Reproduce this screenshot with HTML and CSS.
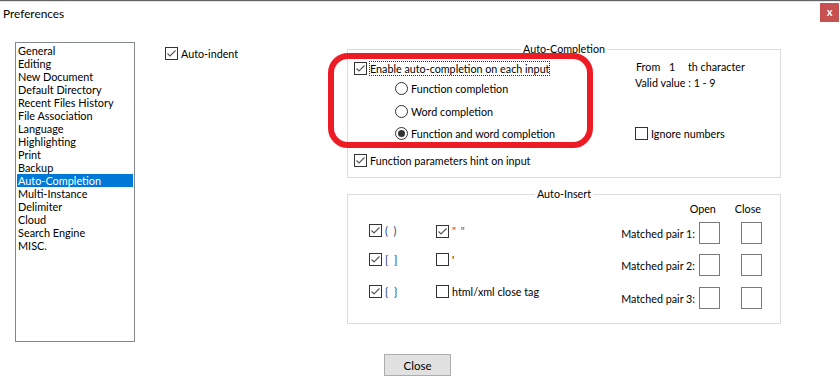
FILE: index.html
```html
<!DOCTYPE html>
<html lang="en">
<head>
    <meta charset="UTF-8">
    <title>Preferences</title>
    <link rel="stylesheet" href="styles.css">
</head>
<body>
<div class="dialog">
    <div class="topline"></div>

    <div class="titlebar">
        <span class="title">Preferences</span>
        <span class="close-x">x</span>
    </div>

    <div class="main">
        <ul class="pages">
            <li>General</li>
            <li>Editing</li>
            <li>New Document</li>
            <li>Default Directory</li>
            <li>Recent Files History</li>
            <li>File Association</li>
            <li>Language</li>
            <li>Highlighting</li>
            <li>Print</li>
            <li>Backup</li>
            <li class="selected">Auto-Completion</li>
            <li>Multi-Instance</li>
            <li>Delimiter</li>
            <li>Cloud</li>
            <li>Search Engine</li>
            <li>MISC.</li>
        </ul>

        <div class="indent-col">
            <label class="row check">
                <svg class="box" width="13" height="13" viewBox="0 0 13 13"><rect x="0.5" y="0.5" width="12" height="12" fill="#fff" stroke="#333"/><polyline points="2.5,6.5 5,9 10.5,3.5" fill="none" stroke="#555" stroke-width="1.1"/></svg>
                <span>Auto-indent</span>
            </label>
        </div>

        <div class="groups">
            <fieldset class="group">
                <legend>Auto-Completion</legend>
                <div class="group-body complete-body">
                    <div class="complete-left">
                        <label class="row check enable-row">
                            <svg class="box" width="13" height="13" viewBox="0 0 13 13"><rect x="0.5" y="0.5" width="12" height="12" fill="#fff" stroke="#333"/><polyline points="2.5,6.5 5,9 10.5,3.5" fill="none" stroke="#555" stroke-width="1.1"/></svg>
                            <span class="focused">Enable auto-completion on each input</span>
                        </label>
                        <div class="radios">
                            <label class="row radio r1">
                                <svg width="13" height="13" viewBox="0 0 13 13"><circle cx="6.5" cy="6.5" r="6" fill="#fff" stroke="#333"/></svg>
                                <span>Function completion</span>
                            </label>
                            <label class="row radio r2">
                                <svg width="13" height="13" viewBox="0 0 13 13"><circle cx="6.5" cy="6.5" r="6" fill="#fff" stroke="#333"/></svg>
                                <span>Word completion</span>
                            </label>
                            <label class="row radio r3">
                                <svg width="13" height="13" viewBox="0 0 13 13"><circle cx="6.5" cy="6.5" r="6" fill="#fff" stroke="#333"/><circle cx="6.5" cy="6.5" r="3.5" fill="#333"/></svg>
                                <span>Function and word completion</span>
                            </label>
                        </div>
                        <label class="row check params-row">
                            <svg class="box" width="13" height="13" viewBox="0 0 13 13"><rect x="0.5" y="0.5" width="12" height="12" fill="#fff" stroke="#333"/><polyline points="2.5,6.5 5,9 10.5,3.5" fill="none" stroke="#555" stroke-width="1.1"/></svg>
                            <span>Function parameters hint on input</span>
                        </label>
                    </div>
                    <div class="complete-right">
                        <div class="line from-line">
                            <span class="from">From</span><span class="num">1</span><span>th character</span>
                        </div>
                        <div class="line">Valid value : 1 - 9</div>
                        <label class="row check ignore-row">
                            <svg class="box" width="13" height="13" viewBox="0 0 13 13"><rect x="0.5" y="0.5" width="12" height="12" fill="#fff" stroke="#333"/></svg>
                            <span>Ignore numbers</span>
                        </label>
                    </div>
                </div>
            </fieldset>

            <fieldset class="group insert-group">
                <legend>Auto-Insert</legend>
                <div class="group-body insert-body">
                    <div class="insert-checks">
                        <label class="row check cell c1">
                            <svg class="box" width="13" height="13" viewBox="0 0 13 13"><rect x="0.5" y="0.5" width="12" height="12" fill="#fff" stroke="#333"/><polyline points="2.5,6.5 5,9 10.5,3.5" fill="none" stroke="#555" stroke-width="1.1"/></svg>
                            <span class="sym">( )</span>
                        </label>
                        <label class="row check cell c2 first">
                            <svg class="box" width="13" height="13" viewBox="0 0 13 13"><rect x="0.5" y="0.5" width="12" height="12" fill="#fff" stroke="#333"/><polyline points="2.5,6.5 5,9 10.5,3.5" fill="none" stroke="#555" stroke-width="1.1"/></svg>
                            <span class="quote">" "</span>
                        </label>
                        <label class="row check cell c1">
                            <svg class="box" width="13" height="13" viewBox="0 0 13 13"><rect x="0.5" y="0.5" width="12" height="12" fill="#fff" stroke="#333"/><polyline points="2.5,6.5 5,9 10.5,3.5" fill="none" stroke="#555" stroke-width="1.1"/></svg>
                            <span class="sym">[ ]</span>
                        </label>
                        <label class="row check cell c2">
                            <svg class="box" width="13" height="13" viewBox="0 0 13 13"><rect x="0.5" y="0.5" width="12" height="12" fill="#fff" stroke="#333"/></svg>
                            <span>'</span>
                        </label>
                        <label class="row check cell c1 last">
                            <svg class="box" width="13" height="13" viewBox="0 0 13 13"><rect x="0.5" y="0.5" width="12" height="12" fill="#fff" stroke="#333"/><polyline points="2.5,6.5 5,9 10.5,3.5" fill="none" stroke="#555" stroke-width="1.1"/></svg>
                            <span class="sym">{ }</span>
                        </label>
                        <label class="row check cell c2 last">
                            <svg class="box" width="13" height="13" viewBox="0 0 13 13"><rect x="0.5" y="0.5" width="12" height="12" fill="#fff" stroke="#333"/></svg>
                            <span>html/xml close tag</span>
                        </label>
                    </div>

                    <div class="pairs">
                        <div class="pairs-head">
                            <span class="open-h">Open</span>
                            <span class="close-h">Close</span>
                        </div>
                        <div class="pair p1">
                            <span>Matched pair 1:</span><span class="pbox"></span><span class="pbox second"></span>
                        </div>
                        <div class="pair p2">
                            <span>Matched pair 2:</span><span class="pbox"></span><span class="pbox second"></span>
                        </div>
                        <div class="pair p3">
                            <span>Matched pair 3:</span><span class="pbox"></span><span class="pbox second"></span>
                        </div>
                    </div>
                </div>
            </fieldset>
        </div>
    </div>

    <div class="footer">
        <button class="btn">Close</button>
    </div>

    <!-- red highlight drawn over the dialog -->
    <div class="annotation"></div>
</div>
</body>
</html>
```

FILE: styles.css
```css
/* Preferences dialog - Auto-Completion page */
:root {
    --text: #000;
    --group-line: #dcdcdc;
    --list-border: #828790;
    --select-bg: #0078d7;
    --mark-red: #ed1c24;
}

html, body {
    margin: 0;
    background: #fff;
}

body {
    font-family: Lato, "Segoe UI", sans-serif;
    font-size: 10.75px;
    color: var(--text);
}

.dialog {
    position: relative;
    width: 840px;
    height: 384px;
    overflow: hidden;
}

.topline {
    height: 1px;
    background: #646464;
    border-bottom: 1px solid #e4e4e4;
}

.titlebar {
    height: 23px;
    display: flex;
    justify-content: space-between;
    align-items: flex-start;
    padding-left: 3px;
}

.title {
    margin-top: 4px;
    line-height: 16px;
    font-size: 11.8px;
}

.close-x {
    width: 19px;
    height: 19px;
    margin: 1px 1px 0 0;
    background: #c75050;
    color: #fff;
    font-weight: bold;
    font-size: 11px;
    line-height: 17px;
    text-align: center;
}

.main {
    display: flex;
    align-items: flex-start;
}

/* left page list */
.pages {
    list-style: none;
    margin: 17px 0 0 15px;
    padding: 1px;
    width: 116px;
    height: 296px;
    border: 1px solid var(--list-border);
    font-size: 10.9px;
}

.pages li {
    height: 13px;
    line-height: 13px;
    padding-left: 1px;
    white-space: nowrap;
}

.pages li.selected {
    background: var(--select-bg);
    color: #fff;
}

.indent-col {
    width: 212px;
    padding: 18px 0 0 30px;
    box-sizing: border-box;
}

/* generic rows */
.row {
    display: flex;
    align-items: center;
    height: 20px;
    white-space: nowrap;
}

.row svg {
    flex: none;
    display: block;
}

.check {
    gap: 3px;
}

.radio {
    gap: 3px;
}

.groups {
    width: 434px;
    margin-top: 17px;
}

.group {
    margin: 0;
    padding: 0;
    min-width: 0;
    border: 1px solid var(--group-line);
}

.group legend {
    margin: 0 auto;
    padding: 0 2px;
    line-height: 14px;
}

.insert-group {
    margin-top: 9px;
}

.group-body {
    display: flex;
}

/* auto-completion */
.complete-body {
    padding: 0 0 7px 6px;
}

.complete-left {
    width: 281px;
}

.enable-row {
    margin-top: 2px;
}

.focused {
    outline: 1px dotted #333;
    outline-offset: 0;
    line-height: 13px;
}

.radios {
    padding-left: 41px;
}

.r2 {
    margin-top: 3px;
}

.r3 {
    margin-top: 2px;
}

.params-row {
    margin-top: 7px;
}

.complete-right .line {
    height: 16px;
    line-height: 16px;
    white-space: nowrap;
}

.from-line {
    margin-top: 3px;
    padding-left: 1px;
}

.from {
    display: inline-block;
    width: 33px;
}

.num {
    display: inline-block;
    width: 19px;
}

.ignore-row {
    margin-top: 32px;
}

/* auto-insert */
.insert-body {
    justify-content: space-between;
    padding: 0 18px 14px 21px;
}

.insert-checks {
    display: grid;
    grid-template-columns: 67px auto;
    align-content: start;
    padding-top: 19px;
    row-gap: 9px;
}

.insert-checks .last {
    margin-top: 3px;
}

.insert-checks .first svg {
    margin-top: 3px;
}

.sym {
    color: #1b3c78;
    letter-spacing: 1.5px;
}

.quote {
    color: #b5421c;
    letter-spacing: 1px;
}

.pairs-head {
    display: flex;
    justify-content: flex-end;
    height: 16px;
    line-height: 16px;
}

.open-h {
    margin-right: 19px;
}

.close-h {
    margin-right: 1px;
}

.pair {
    display: flex;
    justify-content: flex-end;
    align-items: center;
    margin-top: 10px;
    white-space: nowrap;
}

.pair.p1 {
    margin-top: 5px;
}

.pair.p3 {
    margin-top: 11px;
}

.pbox {
    width: 21px;
    height: 22px;
    box-sizing: border-box;
    border: 1px solid #7a7a7a;
    margin-left: 4px;
}

.pbox.second {
    margin-left: 21px;
}

/* bottom button */
.footer {
    margin-top: 12px;
    padding-left: 384px;
}

.btn {
    width: 67px;
    height: 22px;
    padding: 0;
    font: inherit;
    font-size: 11.5px;
    color: var(--text);
    background: #e1e1e1;
    border: 1px solid #adadad;
    border-radius: 0;
}

.annotation {
    position: absolute;
    left: 328px;
    top: 53px;
    width: 265px;
    height: 95px;
    box-sizing: border-box;
    border: 6px solid var(--mark-red);
    border-radius: 20px;
    pointer-events: none;
}
```
